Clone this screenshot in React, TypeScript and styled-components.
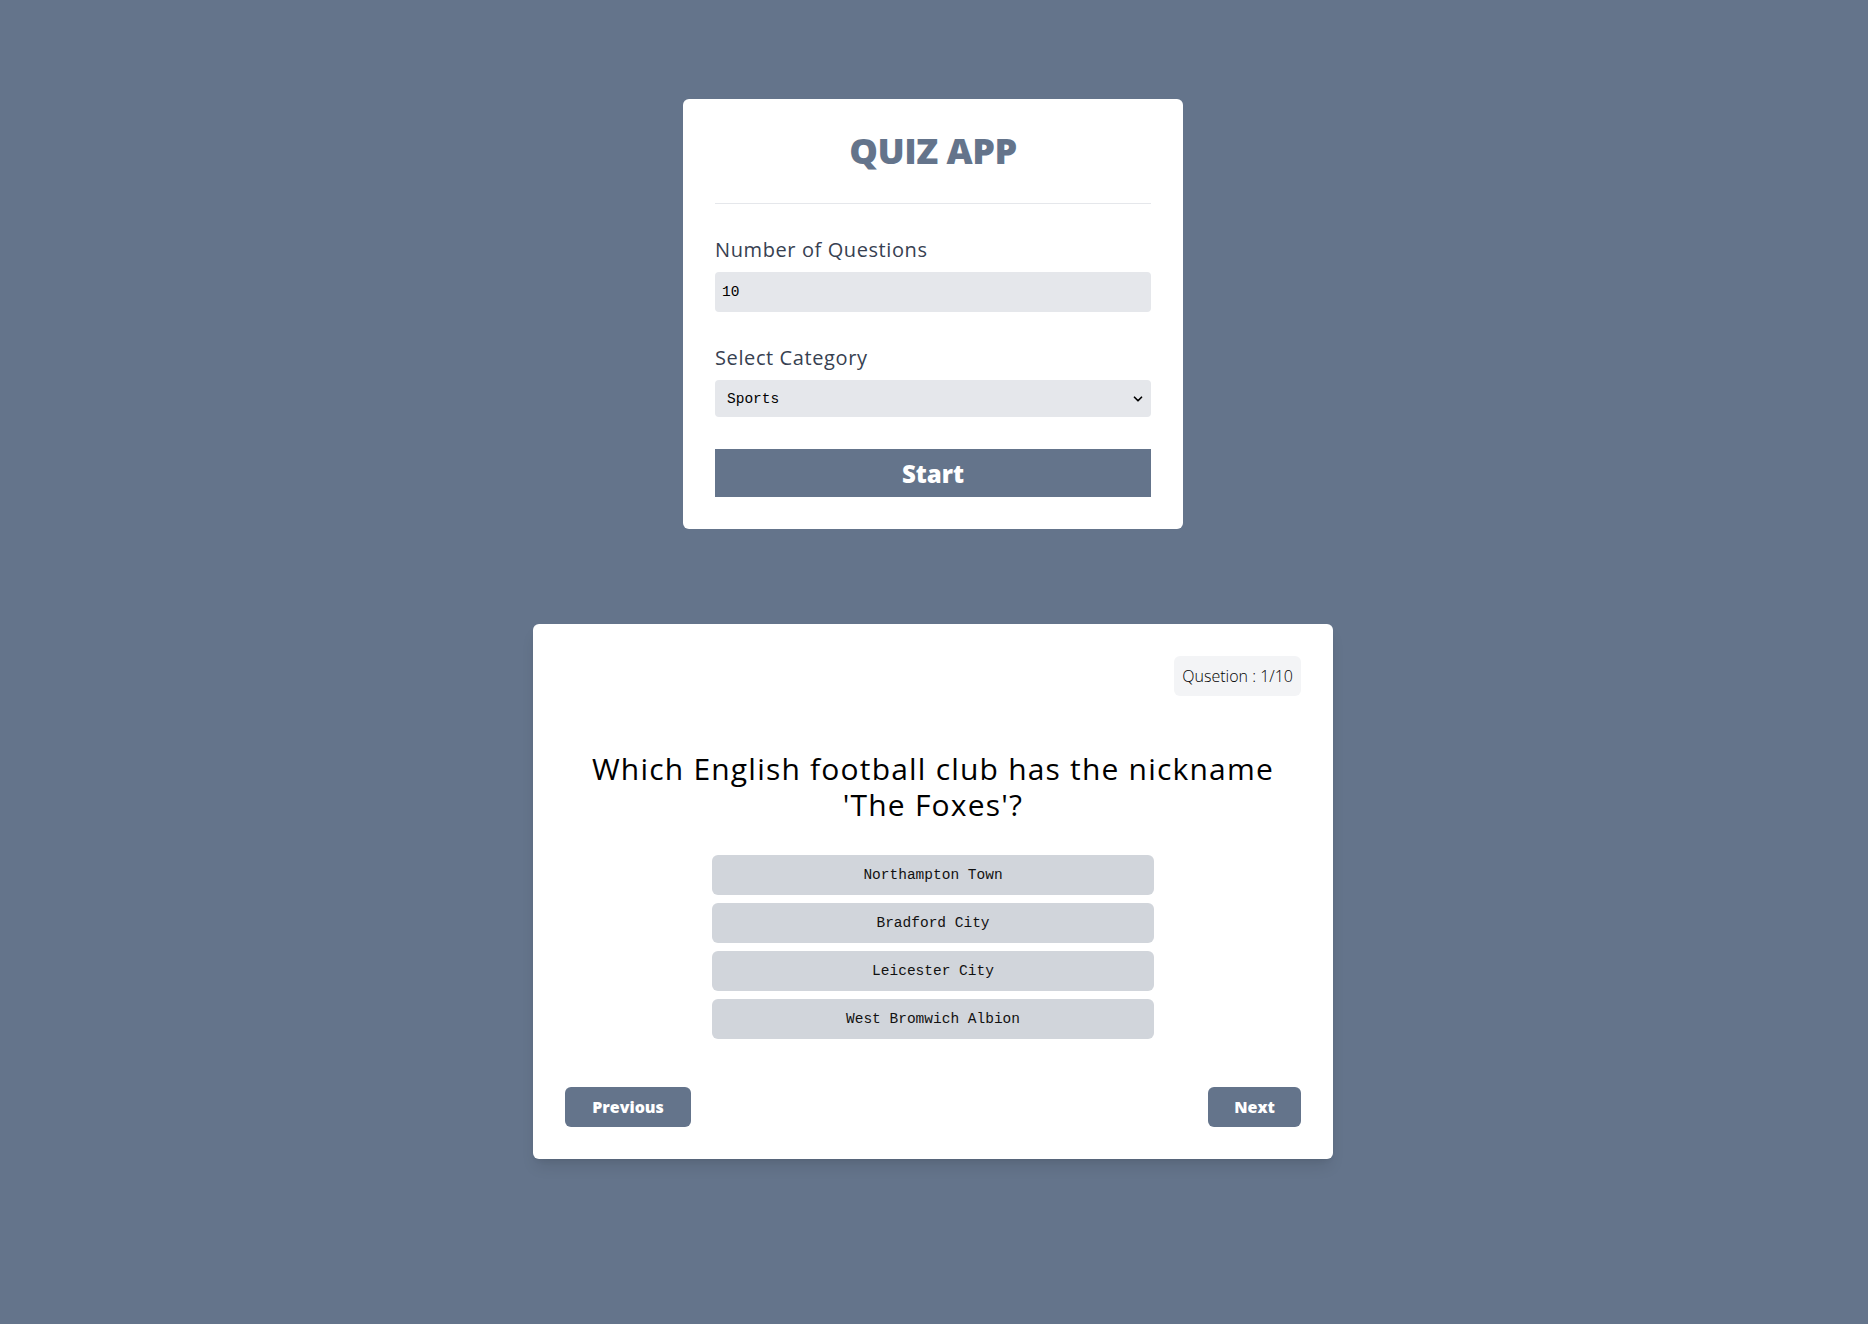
import React from "react";
import styled, { createGlobalStyle } from "styled-components";
import { ChevronDown } from "lucide-react";

const GlobalStyle = createGlobalStyle`
  html, body {
    margin: 0;
    padding: 0;
    background: #64748b;
  }
  body {
    font-family: "Open Sans", "Noto Sans", sans-serif;
  }
  * { box-sizing: border-box; }
`;

const Page = styled.main`
  min-height: 100vh;
  display: flex;
  flex-direction: column;
  align-items: center;
  gap: 95px;
  padding: 99px 2px 80px 0;
  background: #64748b;
`;

const SetupCard = styled.section`
  width: 500px;
  background: #ffffff;
  border-radius: 6px;
  padding: 32px;
`;

const Title = styled.h1`
  margin: 0;
  padding-bottom: 32px;
  border-bottom: 1px solid #e5e7eb;
  text-align: center;
  font-size: 36px;
  line-height: 40px;
  font-weight: 800;
  color: #64748b;
  letter-spacing: -0.5px;
`;

const Form = styled.form`
  display: flex;
  flex-direction: column;
  gap: 32px;
  margin-top: 32px;
`;

const Field = styled.div`
  display: flex;
  flex-direction: column;
  gap: 8px;
`;

const Label = styled.label`
  font-size: 20px;
  line-height: 28px;
  color: #374151;
  letter-spacing: 0.6px;
`;

const monoFont = `"Liberation Mono", "DejaVu Sans Mono", monospace`;

const NumberInput = styled.input`
  height: 40px;
  border: none;
  border-radius: 4px;
  background: #e5e7eb;
  padding: 0 7px;
  font-family: ${monoFont};
  font-size: 14.5px;
  color: #000;
  outline: none;
`;

const SelectWrap = styled.div`
  position: relative;
  height: 37px;
`;

const Select = styled.select`
  appearance: none;
  -webkit-appearance: none;
  width: 100%;
  height: 37px;
  border: none;
  border-radius: 4px;
  background: #e5e7eb;
  padding: 0 12px;
  font-family: ${monoFont};
  font-size: 14.5px;
  color: #000;
  outline: none;
`;

const SelectArrow = styled.span`
  position: absolute;
  right: 6px;
  top: 50%;
  transform: translateY(-50%);
  display: flex;
  pointer-events: none;
  color: #000;
`;

const StartButton = styled.button`
  height: 48px;
  border: none;
  background: #64748b;
  color: #fff;
  font-family: inherit;
  font-size: 24px;
  font-weight: 800;
  cursor: pointer;
`;

const QuizCard = styled.section`
  width: 800px;
  background: #ffffff;
  border-radius: 6px;
  padding: 32px;
  box-shadow: 0 10px 15px -3px rgba(0, 0, 0, 0.1), 0 4px 6px -4px rgba(0, 0, 0, 0.1);
`;

const CardHeader = styled.div`
  display: flex;
  justify-content: flex-end;
`;

const Badge = styled.span`
  background: #f3f4f6;
  border-radius: 6px;
  padding: 8px;
  height: 40px;
  font-size: 16px;
  line-height: 24px;
  font-weight: 300;
  color: #000;
`;

const Question = styled.h2`
  margin: 55px 0 0;
  text-align: center;
  font-size: 30px;
  line-height: 36px;
  font-weight: 400;
  color: #000;
  letter-spacing: 1.2px;
`;

const Answers = styled.div`
  width: 442px;
  margin: 32px auto 0;
  display: flex;
  flex-direction: column;
  gap: 8px;
`;

const AnswerButton = styled.button`
  height: 40px;
  border: none;
  border-radius: 6px;
  background: #d1d5db;
  font-family: ${monoFont};
  font-size: 14.5px;
  color: #111;
  cursor: pointer;
`;

const Nav = styled.div`
  display: flex;
  justify-content: space-between;
  margin-top: 48px;
`;

const NavButton = styled.button<{ $w: number }>`
  width: ${(p) => p.$w}px;
  height: 40px;
  border: none;
  border-radius: 6px;
  background: #64748b;
  color: #fff;
  font-family: inherit;
  font-size: 16px;
  font-weight: 800;
  cursor: pointer;
`;

const answers = ["Northampton Town", "Bradford City", "Leicester City", "West Bromwich Albion"];

export default function App() {
  return (
    <>
      <GlobalStyle />
      <Page>
        <SetupCard>
          <Title>QUIZ APP</Title>
          <Form onSubmit={(e) => e.preventDefault()}>
            <Field>
              <Label htmlFor="num">Number of Questions</Label>
              <NumberInput id="num" type="number" defaultValue={10} />
            </Field>
            <Field>
              <Label htmlFor="cat">Select Category</Label>
              <SelectWrap>
                <Select id="cat" defaultValue="sports">
                  <option value="sports">Sports</option>
                  <option value="history">History</option>
                  <option value="science">Science</option>
                </Select>
                <SelectArrow>
                  <ChevronDown size={14} strokeWidth={3} />
                </SelectArrow>
              </SelectWrap>
            </Field>
            <StartButton type="submit">Start</StartButton>
          </Form>
        </SetupCard>

        <QuizCard>
          <CardHeader>
            <Badge>Qusetion : 1/10</Badge>
          </CardHeader>
          <Question>
            Which English football club has the nickname 'The Foxes'?
          </Question>
          <Answers>
            {answers.map((a) => (
              <AnswerButton key={a}>{a}</AnswerButton>
            ))}
          </Answers>
          <Nav>
            <NavButton $w={126}>Previous</NavButton>
            <NavButton $w={93}>Next</NavButton>
          </Nav>
        </QuizCard>
      </Page>
    </>
  );
}
